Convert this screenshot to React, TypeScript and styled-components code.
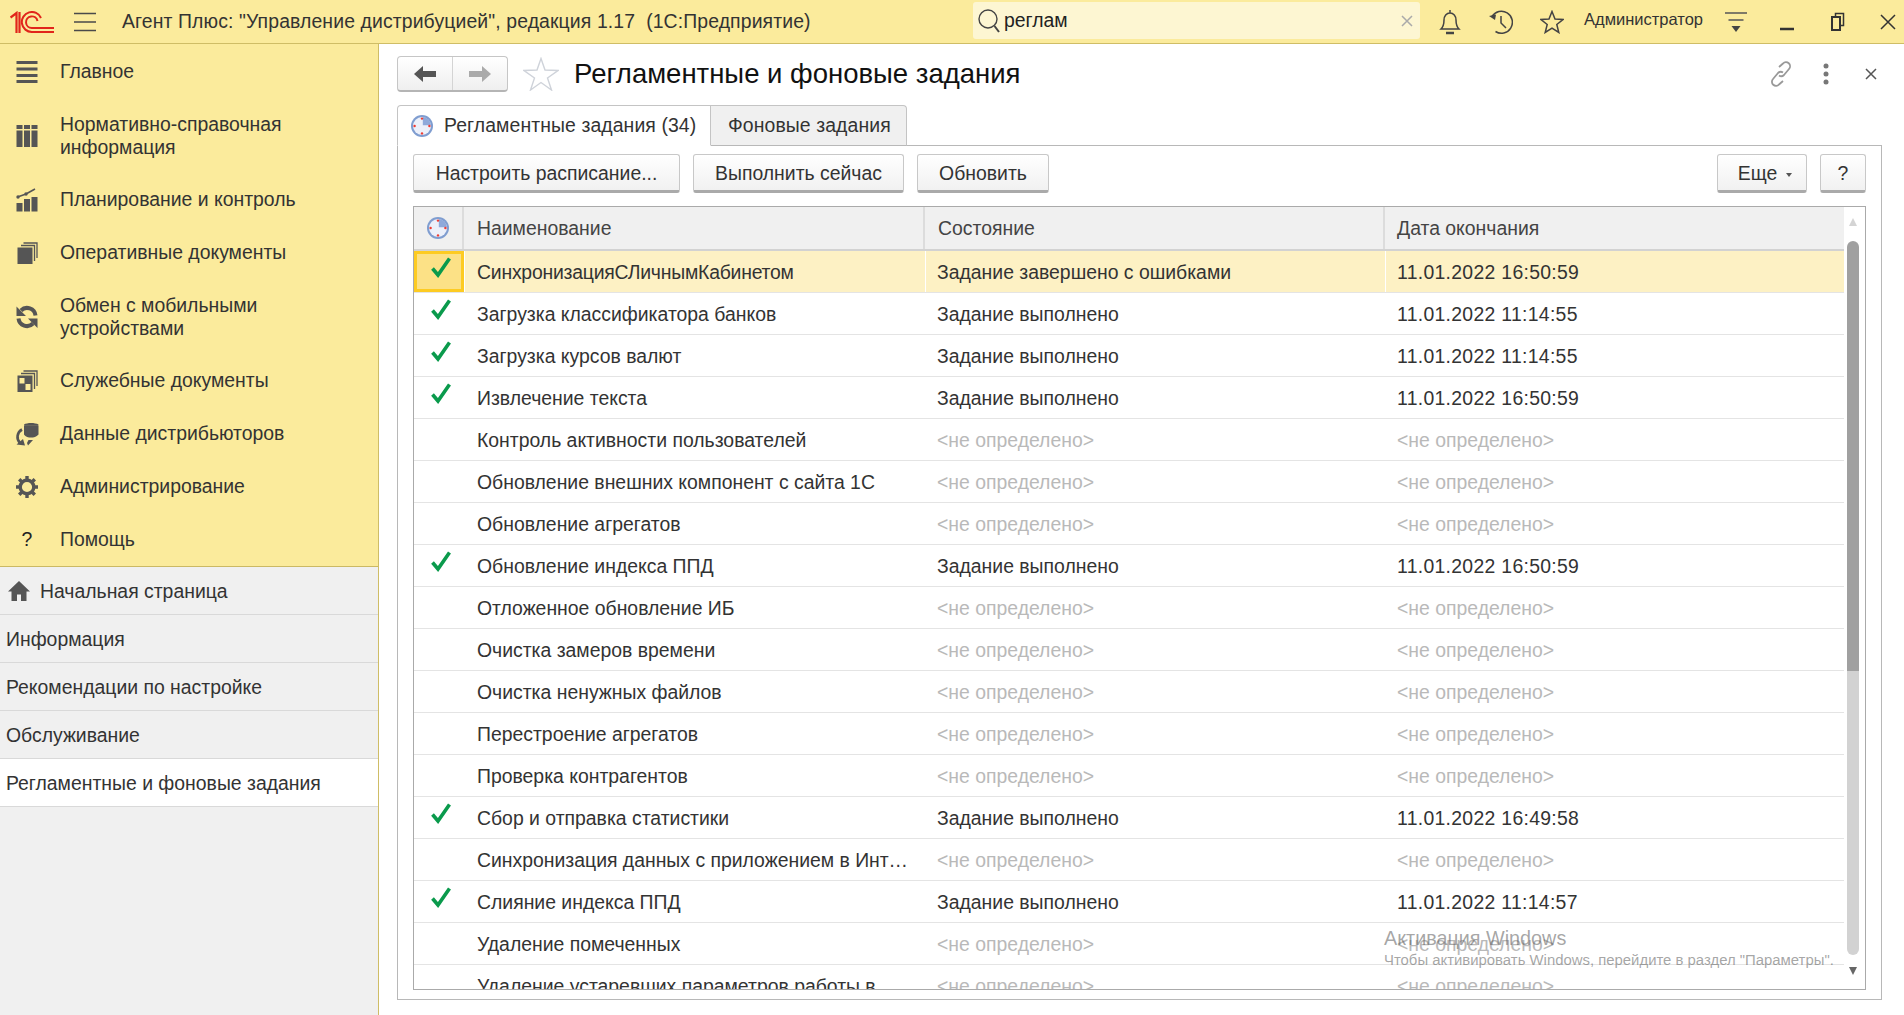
import styled, { createGlobalStyle } from 'styled-components';

const GlobalStyle = createGlobalStyle`
  html, body {
    margin: 0;
    padding: 0;
    background: #fff;
  }
  * {
    box-sizing: border-box;
  }
`;

const Root = styled.div`
  position: relative;
  display: flex;
  flex-direction: column;
  width: 1904px;
  height: 1015px;
  overflow: hidden;
  font-family: 'Liberation Sans', Arial, sans-serif;
  font-size: 19.4px;
  color: #333;
`;

const TopBar = styled.header`
  display: flex;
  align-items: center;
  flex: 0 0 44px;
  height: 44px;
  background: #fbeb9c;
  border-bottom: 1px solid #cfbd66;
`;

const Logo = styled.svg`
  flex: none;
  width: 44px;
  height: 22px;
  margin-left: 10px;
`;

const Burger = styled.svg`
  flex: none;
  width: 22px;
  height: 20px;
  margin-left: 20px;
`;

const AppTitle = styled.div`
  flex: 1;
  margin-left: 26px;
  white-space: pre;
  letter-spacing: 0.12px;
  color: #333;
`;

const SearchBox = styled.div`
  display: flex;
  align-items: center;
  flex: none;
  width: 447px;
  height: 37px;
  margin-bottom: 2px;
  padding: 0 6px 0 4px;
  background: #fdf6d2;
  border-radius: 3px;
`;

const SearchText = styled.span`
  flex: 1;
  margin-left: 3px;
  color: #222;
`;

const TopIcon = styled.div`
  display: flex;
  align-items: center;
  justify-content: center;
  flex: none;
  width: 51px;
  height: 43px;
`;

const CloseBox = styled(TopIcon)`
  width: 41px;
  padding-left: 8px;
`;

const BellBox = styled(TopIcon)`
  margin-left: 4px;
`;

const UserName = styled.div`
  flex: none;
  width: 126px;
  margin-left: 7px;
  margin-bottom: 4px;
  font-size: 16.5px;
  color: #333;
`;

const Body = styled.div`
  display: flex;
  flex: 1;
  min-height: 0;
`;

const Sidebar = styled.aside`
  display: flex;
  flex-direction: column;
  flex: 0 0 379px;
  background: #f0f0f0;
  border-right: 1px solid #cfbd66;
`;

const SectionList = styled.nav`
  display: flex;
  flex-direction: column;
  padding-top: 1px;
  background: #fbeb9c;
  border-bottom: 1px solid #cbb964;
`;

const SectionItem = styled.div<{ $double?: boolean }>`
  display: flex;
  align-items: center;
  height: ${p => (p.$double ? 75 : 53)}px;
  padding-left: 15px;
  line-height: 23px;
  color: #333;
`;

const SectionIcon = styled.div`
  display: flex;
  align-items: center;
  justify-content: center;
  flex: none;
  width: 24px;
  height: 24px;
  margin-right: 21px;
  color: #555;
`;

const HelpMark = styled.span`
  color: #222;
`;

const OpenItem = styled.div<{ $active?: boolean }>`
  display: flex;
  align-items: center;
  height: 48px;
  padding: 1px 0 0 6px;
  background: ${p => (p.$active ? '#fff' : '#f0f0f0')};
  border-bottom: 1px solid #d9d9d9;
  color: #333;
`;

const HomeIcon = styled.svg`
  flex: none;
  width: 24px;
  height: 22px;
  margin-left: 1px;
  margin-right: 9px;
`;

const Main = styled.main`
  display: flex;
  flex-direction: column;
  flex: 1;
  min-width: 0;
  padding: 12px 22px 15px 18px;
  background: #fff;
`;

const TitleRow = styled.div`
  display: flex;
  align-items: center;
  flex: none;
  height: 36px;
  margin-bottom: 13px;
  margin-right: -11px;
`;

const NavGroup = styled.div`
  display: flex;
  flex: none;
  width: 111px;
  height: 36px;
  background: linear-gradient(#fff, #efefef);
  border: 1px solid #c6c6c6;
  border-bottom: 2px solid #b5b5b5;
  border-radius: 4px;
`;

const NavButton = styled.div`
  display: flex;
  align-items: center;
  justify-content: center;
  flex: 1;
  & + & {
    border-left: 1px solid #d4d4d4;
  }
`;

const TitleStar = styled.svg`
  flex: none;
  width: 36px;
  height: 34px;
  margin-left: 15px;
`;

const PageTitle = styled.h1`
  flex: 1;
  margin: 0 0 0 15px;
  font-size: 27.5px;
  font-weight: 400;
  color: #111;
`;

const TitleAction = styled.div`
  display: flex;
  align-items: center;
  justify-content: center;
  flex: none;
  width: 45px;
  height: 36px;
`;

const TabRow = styled.div`
  position: relative;
  z-index: 1;
  display: flex;
  flex: none;
  height: 41px;
  margin-bottom: -1px;
`;

const Tab = styled.div<{ $active?: boolean }>`
  display: flex;
  align-items: center;
  gap: 10px;
  height: 41px;
  padding: 0 0 0 ${p => (p.$active ? 12 : 17)}px;
  width: ${p => (p.$active ? 314 : 196)}px;
  letter-spacing: 0.1px;
  background: ${p => (p.$active ? '#fff' : '#f0f0f0')};
  border: 1px solid #c4c4c4;
  border-bottom: ${p => (p.$active ? '1px solid #fff' : '1px solid #b8b8b8')};
  border-left-width: ${p => (p.$active ? 1 : 0)}px;
  border-radius: ${p => (p.$active ? '4px 0 0 0' : '0 4px 0 0')};
  color: #333;
`;

const Panel = styled.section`
  display: flex;
  flex-direction: column;
  flex: 1;
  min-height: 0;
  padding: 8px 15px 9px;
  border: 1px solid #b8b8b8;
`;

const Toolbar = styled.div`
  display: flex;
  flex: none;
  gap: 13px;
  height: 39px;
  margin-bottom: 13px;
`;

const ToolButton = styled.button<{ $width: number }>`
  display: flex;
  align-items: center;
  justify-content: center;
  flex: none;
  width: ${p => p.$width}px;
  height: 39px;
  padding: 1px 0 0;
  font: inherit;
  color: #333;
  background: linear-gradient(#fff, #f1f1f1);
  border: 1px solid #c8c8c8;
  border-bottom: 3px solid #aaa;
  border-radius: 3px;
`;

const MoreButton = styled(ToolButton)`
  padding-left: 6px;
`;

const ToolSpacer = styled.div`
  flex: 1;
`;

const MoreCaret = styled.span`
  width: 0;
  height: 0;
  margin-left: 9px;
  margin-top: 3px;
  border-left: 3px solid transparent;
  border-right: 3px solid transparent;
  border-top: 4px solid #555;
`;

const TableFrame = styled.div`
  display: flex;
  flex: 1;
  min-height: 0;
  overflow: hidden;
  border: 1px solid #aaa;
`;

const TableBody = styled.div`
  flex: 1;
  min-width: 0;
  overflow: hidden;
`;

const HeaderRow = styled.div`
  display: grid;
  grid-template-columns: 50px 461px 460px 1fr;
  height: 44px;
  background: #f0f0f0;
  border-bottom: 2px solid #d2d2d2;
`;

const HeaderCell = styled.div<{ $icon?: boolean }>`
  display: flex;
  align-items: center;
  justify-content: ${p => (p.$icon ? 'center' : 'flex-start')};
  padding-left: ${p => (p.$icon ? 0 : 13)}px;
  border-right: 2px solid #dcdcdc;
  color: #444;
  &:last-child {
    padding-left: 12px;
    border-right: 0;
  }
`;

const Row = styled.div<{ $selected?: boolean }>`
  display: grid;
  grid-template-columns: 50px 461px 460px 1fr;
  height: 42px;
  background: ${p => (p.$selected ? '#fdf1c4' : '#fff')};
  border-bottom: 1px solid #e4e4e4;
`;

const MarkCell = styled.div<{ $selected?: boolean }>`
  display: flex;
  justify-content: center;
  padding: ${p => (p.$selected ? '1px 0 0 3px' : '4px 0 0 3px')};
  background: ${p => (p.$selected ? '#fce186' : 'transparent')};
  border: ${p => (p.$selected ? '3px solid #fdcb22' : '0')};
`;

const Cell = styled.div<{ $muted?: boolean; $selected?: boolean }>`
  padding: 0 15px 0 13px;
  line-height: 43px;
  white-space: nowrap;
  overflow: hidden;
  text-overflow: ellipsis;
  color: ${p => (p.$muted ? '#b9b9b9' : '#333')};
  box-shadow: ${p => (p.$selected ? 'inset 1px 0 0 #fff' : 'none')};
`;

const NameCell = styled(Cell)`
  letter-spacing: ${p => (p.$selected ? '-0.22px' : '0')};
`;

const StateCell = styled(Cell)`
  padding-left: 12px;
`;

const DateCell = styled(Cell)<{ $filled?: boolean }>`
  padding-left: 12px;
  letter-spacing: ${p => (p.$filled ? '0.3px' : '0')};
`;

const ScrollTrack = styled.div`
  display: flex;
  flex-direction: column;
  align-items: center;
  flex: 0 0 21px;
  padding-right: 3px;
`;

const ArrowUp = styled.div`
  flex: none;
  width: 0;
  height: 0;
  margin: 11px 0 15px;
  border-left: 4px solid transparent;
  border-right: 4px solid transparent;
  border-bottom: 8px solid #d4d4d4;
`;

const ArrowDown = styled.div`
  flex: none;
  width: 0;
  height: 0;
  margin-top: 12px;
  border-left: 4px solid transparent;
  border-right: 4px solid transparent;
  border-top: 8px solid #666;
`;

const ThumbDark = styled.div`
  flex: none;
  width: 12px;
  height: 430px;
  background: #a0a0a0;
  border-radius: 6px 6px 0 0;
`;

const ThumbLight = styled.div`
  flex: none;
  width: 12px;
  height: 284px;
  background: #d2d2d2;
  border-radius: 0 0 6px 6px;
`;

const Watermark = styled.div`
  position: absolute;
  left: 1384px;
  top: 925px;
  color: rgba(90, 90, 90, 0.55);
  pointer-events: none;
`;

const WatermarkTitle = styled.div`
  font-size: 19.8px;
  line-height: 26px;
`;

const WatermarkNote = styled.div`
  font-size: 14.9px;
  line-height: 18px;
  white-space: nowrap;
`;

const ClockIcon = () => (
  <svg width="24" height="24" viewBox="0 0 24 24">
    <circle cx="12" cy="12" r="11" fill="#7f9dd0" />
    <circle cx="12" cy="12" r="9" fill="#ecf0fa" />
    <path d="M12.800 11.200V3A9 9 0 0 1 21 11.200Z" fill="#8fa9da" />
    <circle cx="12" cy="4.600" r="1.200" fill="#ee3b32" />
    <circle cx="4.600" cy="12" r="1.200" fill="#ee3b32" />
    <circle cx="19.400" cy="12" r="1.200" fill="#ee3b32" />
    <circle cx="12" cy="19.400" r="1.200" fill="#ee3b32" />
  </svg>
);

const CheckIcon = () => (
  <svg width="24" height="24" viewBox="0 0 24 24">
    <path d="M3.500 13.500 9 20 20.500 3.500" fill="none" stroke="#0a9a4c" strokeWidth="3.600" />
  </svg>
);

const sectionIcons: Record<string, React.ReactNode> = {
  main: (
    <svg width="24" height="24" viewBox="0 0 24 24" fill="currentColor">
      <rect x="1.500" y="1" width="21" height="3" />
      <rect x="1.500" y="7.500" width="21" height="3" />
      <rect x="1.500" y="14" width="21" height="3" />
      <rect x="1.500" y="20" width="21" height="3" />
    </svg>
  ),
  catalog: (
    <svg width="24" height="24" viewBox="0 0 24 24" fill="currentColor">
      <rect x="1.500" y="1" width="6" height="4" />
      <rect x="9" y="1" width="6" height="4" />
      <rect x="16.500" y="1" width="6" height="4" />
      <rect x="1.500" y="6.500" width="6" height="16.500" />
      <rect x="9" y="6.500" width="6" height="16.500" />
      <rect x="16.500" y="6.500" width="6" height="16.500" />
    </svg>
  ),
  chart: (
    <svg width="24" height="24" viewBox="0 0 24 24" fill="currentColor">
      <rect x="1.500" y="15" width="6" height="8.500" />
      <rect x="9" y="11" width="6" height="12.500" />
      <rect x="16.500" y="9" width="6" height="14.500" />
      <path d="M2.500 9 11 6l9-5" fill="none" stroke="currentColor" strokeWidth="1.600" />
      <circle cx="3" cy="9" r="1.700" />
      <circle cx="11" cy="6" r="1.700" />
    </svg>
  ),
  docs: (
    <svg width="24" height="24" viewBox="0 0 24 24" fill="currentColor">
      <rect x="2.500" y="6.500" width="15" height="16.500" />
      <path d="M6 4.500h13.500V20M8.500 2h13.500v15" fill="none" stroke="currentColor" strokeWidth="1.300" />
    </svg>
  ),
  sync: (
    <svg width="24" height="24" viewBox="0 0 24 24" fill="none" stroke="currentColor" strokeWidth="4">
      <path d="M20.500 10.500A8.500 8.500 0 0 0 6 5.500" />
      <path d="M3.500 13.500A8.500 8.500 0 0 0 18 18.500" />
      <path d="M1.500 1.500V11H11ZM22.500 23v-9.500H13Z" fill="currentColor" stroke="none" />
    </svg>
  ),
  service: (
    <svg width="24" height="24" viewBox="0 0 24 24" fill="currentColor">
      <rect x="2.500" y="6.500" width="15" height="16.500" />
      <rect x="4.500" y="9" width="5" height="5.500" fill="#fbeb9c" />
      <rect x="10.500" y="15" width="5" height="6" fill="#fbeb9c" />
      <path d="M6 4.500h13.500V20M8.500 2h13.500v15" fill="none" stroke="currentColor" strokeWidth="1.300" />
    </svg>
  ),
  data: (
    <svg width="24" height="24" viewBox="0 0 24 24" fill="currentColor">
      <path d="M9 3.500h14.500v9c-2 2.500-5 3-7.500 3s-5.500-.5-7-3Z" />
      <path d="M9 2.500c3-2 11-2 14.500 0l-.5 1.200H9.500Z" />
      <path d="M7 7.500A8.500 8.500 0 0 0 5 21" fill="none" stroke="currentColor" strokeWidth="2.600" />
      <path d="M1.500 22.500 10 23.500 8 17ZM13 23.500l5-5.500h-4.500l-1.500 3Z" />
    </svg>
  ),
  gear: (
    <svg width="24" height="24" viewBox="0 0 24 24">
      <circle cx="12" cy="12" r="6.800" fill="none" stroke="currentColor" strokeWidth="3.400" />
      <g stroke="currentColor" strokeWidth="3.400">
        <path d="M12 1v4M12 19v4M1 12h4M19 12h4M4.200 4.200l2.800 2.800M17 17l2.800 2.800M19.800 4.200 17 7M7 17l-2.800 2.800" />
      </g>
    </svg>
  ),
  help: <HelpMark>?</HelpMark>,
};

const sections = [
  { icon: 'main', label: 'Главное' },
  { icon: 'catalog', label: ['Нормативно-справочная', 'информация'] },
  { icon: 'chart', label: 'Планирование и контроль' },
  { icon: 'docs', label: 'Оперативные документы' },
  { icon: 'sync', label: ['Обмен с мобильными', 'устройствами'] },
  { icon: 'service', label: 'Служебные документы' },
  { icon: 'data', label: 'Данные дистрибьюторов' },
  { icon: 'gear', label: 'Администрирование' },
  { icon: 'help', label: 'Помощь' },
];

const openTabs = ['Информация', 'Рекомендации по настройке', 'Обслуживание'];

const DONE = 'Задание выполнено';
const UNSET = '<не определено>';

const jobs = [
  { name: 'СинхронизацияСЛичнымКабинетом', state: 'Задание завершено с ошибками', date: '11.01.2022 16:50:59' },
  { name: 'Загрузка классификатора банков', state: DONE, date: '11.01.2022 11:14:55' },
  { name: 'Загрузка курсов валют', state: DONE, date: '11.01.2022 11:14:55' },
  { name: 'Извлечение текста', state: DONE, date: '11.01.2022 16:50:59' },
  { name: 'Контроль активности пользователей' },
  { name: 'Обновление внешних компонент с сайта 1С' },
  { name: 'Обновление агрегатов' },
  { name: 'Обновление индекса ППД', state: DONE, date: '11.01.2022 16:50:59' },
  { name: 'Отложенное обновление ИБ' },
  { name: 'Очистка замеров времени' },
  { name: 'Очистка ненужных файлов' },
  { name: 'Перестроение агрегатов' },
  { name: 'Проверка контрагентов' },
  { name: 'Сбор и отправка статистики', state: DONE, date: '11.01.2022 16:49:58' },
  { name: 'Синхронизация данных с приложением в Интернете' },
  { name: 'Слияние индекса ППД', state: DONE, date: '11.01.2022 11:14:57' },
  { name: 'Удаление помеченных' },
  { name: 'Удаление устаревших параметров работы в ...' },
];

const App = () => (
  <Root>
    <GlobalStyle />
    <TopBar>
      <Logo viewBox="0 0 44 22">
        <g fill="none" stroke="#e1251b" strokeWidth="2">
          <path d="M0.500 6.500 6.500 2v20M9.500 1v21" strokeWidth="2.200" />
          <path d="M31 7A10 10 0 1 0 22 21H44" />
          <path d="M27.500 10A5.800 5.800 0 1 0 22 17H44" />
        </g>
      </Logo>
      <Burger viewBox="0 0 22 20">
        <path d="M0 1.500h22M0 10h22M0 18.500h22" stroke="#4a4a4a" strokeWidth="1.400" />
      </Burger>
      <AppTitle>Агент Плюс: "Управление дистрибуцией", редакция 1.17  (1С:Предприятие)</AppTitle>
      <SearchBox>
        <svg width="24" height="26" viewBox="0 0 24 26" fill="none" stroke="#444" strokeWidth="1.400">
          <circle cx="11" cy="11" r="9" />
          <path d="M17.500 18 22 24" strokeWidth="2" />
        </svg>
        <SearchText>реглам</SearchText>
        <svg width="14" height="14" viewBox="0 0 14 14">
          <path d="M2 2l10 10M12 2 2 12" stroke="#aaa" strokeWidth="1.500" />
        </svg>
      </SearchBox>
      <BellBox>
        <svg width="22" height="26" viewBox="0 0 22 26" fill="none" stroke="#444" strokeWidth="1.500">
          <path d="M11 1v3M2 20c2-2 3-4 3-9 0-4 2.500-7 6-7s6 3 6 7c0 5 1 7 3 9Z" />
          <path d="M7 24h8" strokeWidth="2.500" />
        </svg>
      </BellBox>
      <TopIcon>
        <svg width="24" height="26" viewBox="0 0 24 26" fill="none" stroke="#444" strokeWidth="1.500">
          <path d="M3 7.500A11 11 0 1 1 6.500 22.500" />
          <path d="M12 7v7l5 5" />
          <path d="M0 7l7-1.500L6 11Z" fill="#444" stroke="none" />
        </svg>
      </TopIcon>
      <TopIcon>
        <svg width="24" height="24" viewBox="0 0 24 24" fill="none" stroke="#444" strokeWidth="1.500">
          <path d="M12 1.500 15 9l8 .5-6.200 5 2 8-6.800-4.400L5.200 22.500l2-8L1 9.500 9 9Z" />
        </svg>
      </TopIcon>
      <UserName>Администратор</UserName>
      <TopIcon>
        <svg width="22" height="24" viewBox="0 0 22 24">
          <path d="M0 3h22M3.500 10h15" stroke="#555" strokeWidth="1.600" />
          <path d="M6.500 16h9L11 22Z" fill="#444" />
        </svg>
      </TopIcon>
      <TopIcon>
        <svg width="14" height="20" viewBox="0 0 14 20">
          <path d="M0 17h14" stroke="#333" strokeWidth="2.500" />
        </svg>
      </TopIcon>
      <TopIcon>
        <svg width="14" height="20" viewBox="0 0 14 20" fill="none" stroke="#333" strokeWidth="1.500">
          <rect x="1" y="5" width="8" height="13" strokeWidth="2" />
          <path d="M4.500 5V1.500h8v12H9" />
        </svg>
      </TopIcon>
      <CloseBox>
        <svg width="16" height="16" viewBox="0 0 16 16">
          <path d="M1 1l14 14M15 1 1 15" stroke="#333" strokeWidth="1.500" />
        </svg>
      </CloseBox>
    </TopBar>
    <Body>
      <Sidebar>
        <SectionList>
          {sections.map(section => {
            const lines = Array.isArray(section.label) ? section.label : [section.label];
            return (
              <SectionItem key={lines[0]} $double={lines.length > 1}>
                <SectionIcon>{sectionIcons[section.icon]}</SectionIcon>
                <div>
                  {lines.map(line => (
                    <div key={line}>{line}</div>
                  ))}
                </div>
              </SectionItem>
            );
          })}
        </SectionList>
        <OpenItem>
          <HomeIcon viewBox="0 0 24 22">
            <path d="M12 1 1 11.500h3.500V21h5.500v-6.500h4V21h5.500v-9.500H23Z" fill="#555" />
          </HomeIcon>
          Начальная страница
        </OpenItem>
        {openTabs.map(tab => (
          <OpenItem key={tab}>{tab}</OpenItem>
        ))}
        <OpenItem $active>Регламентные и фоновые задания</OpenItem>
      </Sidebar>
      <Main>
        <TitleRow>
          <NavGroup>
            <NavButton>
              <svg width="22" height="18" viewBox="0 0 22 18">
                <path d="M0 9 9 1v5h13v6H9v5Z" fill="#555" />
              </svg>
            </NavButton>
            <NavButton>
              <svg width="22" height="18" viewBox="0 0 22 18">
                <path d="M22 9 13 1v5H0v6h13v5Z" fill="#aaa" />
              </svg>
            </NavButton>
          </NavGroup>
          <TitleStar viewBox="0 0 36 34">
            <path d="M18 1.500 22 13l13 .5-10.500 7.500 4 12-10.500-7.500L7.500 33l4-12L1 13.500 14 13Z" fill="none" stroke="#cfd3da" strokeWidth="1.400" />
          </TitleStar>
          <PageTitle>Регламентные и фоновые задания</PageTitle>
          <TitleAction>
            <svg width="24" height="26" viewBox="0 0 24 26" fill="none" stroke="#999" strokeWidth="1.800">
              <path d="M10 6 14 2.500a4 4 0 0 1 6 5.500l-5 6a4 4 0 0 1-5 .5" />
              <path d="M14 20 10 23.500a4 4 0 0 1-6-5.500l5-6a4 4 0 0 1 5-.5" />
            </svg>
          </TitleAction>
          <TitleAction>
            <svg width="6" height="22" viewBox="0 0 6 22" fill="#777">
              <circle cx="3" cy="3" r="2.500" />
              <circle cx="3" cy="11" r="2.500" />
              <circle cx="3" cy="19" r="2.500" />
            </svg>
          </TitleAction>
          <TitleAction>
            <svg width="12" height="12" viewBox="0 0 12 12">
              <path d="M1 1l10 10M11 1 1 11" stroke="#555" strokeWidth="1.500" />
            </svg>
          </TitleAction>
        </TitleRow>
        <TabRow>
          <Tab $active>
            <ClockIcon />
            Регламентные задания (34)
          </Tab>
          <Tab>Фоновые задания</Tab>
        </TabRow>
        <Panel>
          <Toolbar>
            <ToolButton $width={267}>Настроить расписание...</ToolButton>
            <ToolButton $width={211}>Выполнить сейчас</ToolButton>
            <ToolButton $width={132}>Обновить</ToolButton>
            <ToolSpacer />
            <MoreButton $width={90}>
              Еще
              <MoreCaret />
            </MoreButton>
            <ToolButton $width={46}>?</ToolButton>
          </Toolbar>
          <TableFrame>
            <TableBody>
              <HeaderRow>
                <HeaderCell $icon>
                  <ClockIcon />
                </HeaderCell>
                <HeaderCell>Наименование</HeaderCell>
                <HeaderCell>Состояние</HeaderCell>
                <HeaderCell>Дата окончания</HeaderCell>
              </HeaderRow>
              {jobs.map((job, index) => (
                <Row key={job.name} $selected={index === 0}>
                  <MarkCell $selected={index === 0}>{job.state && <CheckIcon />}</MarkCell>
                  <NameCell $selected={index === 0}>{job.name}</NameCell>
                  <StateCell $selected={index === 0} $muted={!job.state}>{job.state ?? UNSET}</StateCell>
                  <DateCell $selected={index === 0} $muted={!job.date} $filled={!!job.date}>{job.date ?? UNSET}</DateCell>
                </Row>
              ))}
            </TableBody>
            <ScrollTrack>
              <ArrowUp />
              <ThumbDark />
              <ThumbLight />
              <ArrowDown />
            </ScrollTrack>
          </TableFrame>
        </Panel>
      </Main>
    </Body>
    <Watermark>
      <WatermarkTitle>Активация Windows</WatermarkTitle>
      <WatermarkNote>Чтобы активировать Windows, перейдите в раздел "Параметры".</WatermarkNote>
    </Watermark>
  </Root>
);

export default App;
